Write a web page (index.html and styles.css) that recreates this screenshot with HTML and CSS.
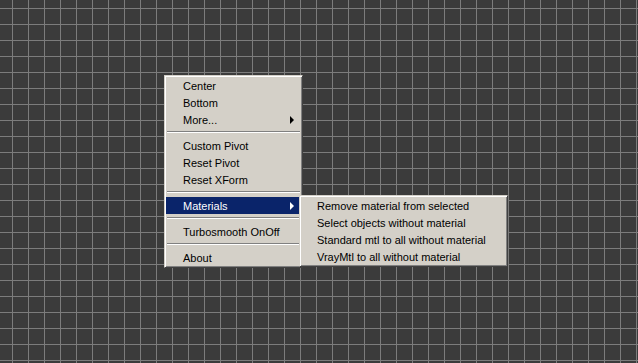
FILE: index.html
```html
<!DOCTYPE html>
<html lang="en">
<head>
    <meta charset="UTF-8">
    <meta name="viewport" content="width=device-width, initial-scale=1.0">
    <title>Quad Menu</title>
    <link rel="stylesheet" href="styles.css">
</head>
<body>
    <div class="viewport">
        <div class="menu main-menu">
            <div class="item">Center</div>
            <div class="item">Bottom</div>
            <div class="item">More...<span class="arrow"></span></div>
            <div class="sep"></div>
            <div class="item">Custom Pivot</div>
            <div class="item">Reset Pivot</div>
            <div class="item">Reset XForm</div>
            <div class="sep"></div>
            <div class="item active">Materials<span class="arrow"></span></div>
            <div class="sep"></div>
            <div class="item">Turbosmooth OnOff</div>
            <div class="sep"></div>
            <div class="item">About</div>
        </div>

        <div class="menu sub-menu">
            <div class="item">Remove material from selected</div>
            <div class="item">Select objects without material</div>
            <div class="item">Standard mtl to all without material</div>
            <div class="item">VrayMtl to all without material</div>
        </div>
    </div>
</body>
</html>
```

FILE: styles.css
```css
body {
    margin: 0;
    overflow: hidden;
    font-family: "Liberation Sans", Arial, sans-serif;
    font-size: 11px;
}
.viewport {
    position: relative;
    width: 638px;
    height: 363px;
    background-color: #3b3b3b;
    background-image:
        linear-gradient(to right, #7c7c7c 1px, transparent 1px),
        linear-gradient(to bottom, #7c7c7c 1px, transparent 1px);
    background-size: 16px 16px;
    background-position: 12px 8px;
}
.menu {
    position: absolute;
    box-sizing: border-box;
    padding: 1px;
    background: #d4d0c8;
    border: 1px solid;
    border-color: #d4d0c8 #404040 #404040 #d4d0c8;
    box-shadow: inset 1px 1px #ffffff, inset -1px -1px #808080;
}
.main-menu {
    left: 164px;
    top: 75px;
    width: 139px;
}
.sub-menu {
    left: 299px;
    top: 195px;
    width: 209px;
}
.item {
    display: flex;
    align-items: center;
    justify-content: space-between;
    height: 17px;
    padding: 0 7px 0 17px;
    color: #000;
    white-space: nowrap;
}
.sub-menu .item {
    padding-left: 16px;
}
.item.active {
    background: #0a246a;
    color: #fff;
}
.arrow {
    width: 0;
    height: 0;
    border-left: 4px solid #000;
    border-top: 4px solid transparent;
    border-bottom: 4px solid transparent;
}
.active .arrow {
    border-left-color: #fff;
}
.sep {
    height: 0;
    margin: 3px 1px 4px;
    border-top: 1px solid #808080;
    border-bottom: 1px solid #fff;
}
```
